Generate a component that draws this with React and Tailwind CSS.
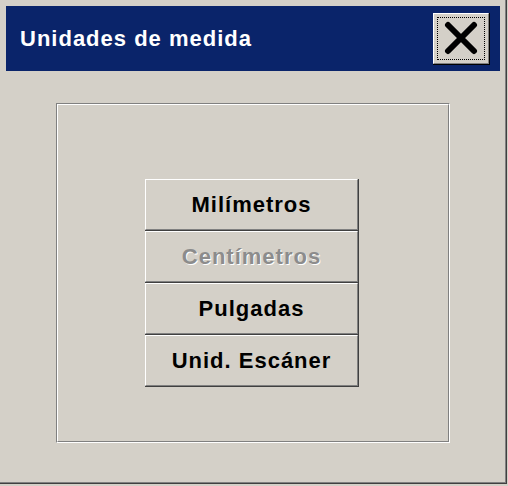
const UNITS = [
    { label: "Milímetros" },
    { label: "Centímetros", disabled: true },
    { label: "Pulgadas" },
    { label: "Unid. Escáner" },
];

function UnitButton({ label, disabled }) {
    return (
        <div className="w-[214px] h-[52px] border-r border-b border-[#404040]">
            <button
                disabled={disabled}
                className="w-full h-full flex items-center justify-center bg-[#d4d0c8] border-t border-l border-t-white border-l-white border-r border-b border-r-[#808080] border-b-[#808080]"
            >
                <span
                    className={`text-[22px] font-bold leading-none tracking-[1px] ${disabled ? "text-[#8c8c8c] [text-shadow:1px_1px_0_#ffffff]" : "text-black"}`}
                >
                    {label}
                </span>
            </button>
        </div>
    );
}

function CloseButton() {
    return (
        <div className="w-[57px] h-[52px] border-r border-b border-black">
            <button className="w-full h-full bg-[#d4d0c8] border-t border-l border-t-white border-l-white border-r border-b border-r-[#808080] border-b-[#808080] p-[3px]">
                <div className="w-full h-full border border-dotted border-black flex items-center justify-center">
                    <svg width="36" height="34" viewBox="0 0 36 34">
                        <path d="M5 4 L31 30 M31 4 L5 30" stroke="#000" strokeWidth="6" strokeLinecap="round" />
                    </svg>
                </div>
            </button>
        </div>
    );
}

export default function App() {
    return (
        <div className="w-[508px] h-[486px] bg-[#d4d0c8] font-['Liberation_Sans',Arial,sans-serif]">
            {/* window frame */}
            <div className="w-[507px] h-[484px] border-r border-b border-[#404040]">
                <div className="w-full h-full border-r border-b border-[#808080] pt-[6px]">
                    {/* title bar */}
                    <div className="ml-[6px] mr-[5px] h-[65px] bg-[#0a246a] flex items-center justify-between pl-[14px] pr-[10px]">
                        <span className="text-white text-[22px] font-bold leading-none tracking-[1px]">Unidades de medida</span>
                        <CloseButton />
                    </div>

                    {/* group box */}
                    <div className="ml-[56px] mt-[32px] w-[394px] h-[340px] border border-t-[#808080] border-l-[#808080] border-b-white border-r-white">
                        <div className="w-full h-full border border-t-white border-l-white border-b-[#808080] border-r-[#808080] pt-[74px] pl-[87px]">
                            {UNITS.map((u) => (
                                <UnitButton key={u.label} label={u.label} disabled={u.disabled} />
                            ))}
                        </div>
                    </div>
                </div>
            </div>
        </div>
    );
}
